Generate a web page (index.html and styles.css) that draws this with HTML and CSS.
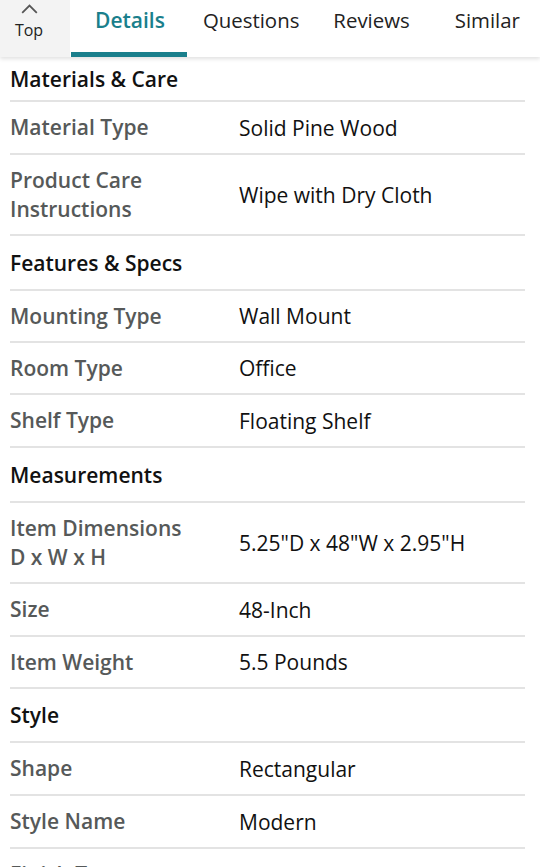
FILE: index.html
```html
<!DOCTYPE html>
<html>
<head>
<meta charset="utf-8">
<link rel="stylesheet" href="styles.css">
</head>
<body>
<nav class="tabs">
  <div class="top">
    <svg class="chev" width="17" height="10" viewBox="0 0 17 10"><path d="M1.2 8.8 L8.5 1.6 L15.8 8.8" fill="none" stroke="#555" stroke-width="1.8"/></svg>
    <span>Top</span>
  </div>
  <div class="tab active">Details</div>
  <div class="tab t2">Questions</div>
  <div class="tab t3">Reviews</div>
  <div class="tab t4">Similar</div>
</nav>
<main class="specs">
  <h2 class="head first">Materials &amp; Care</h2>
  <div class="row"><div class="lbl">Material Type</div><div class="val">Solid Pine Wood</div></div>
  <div class="row tall"><div class="lbl">Product Care<br>Instructions</div><div class="val">Wipe with Dry Cloth</div></div>
  <h2 class="head">Features &amp; Specs</h2>
  <div class="row short"><div class="lbl">Mounting Type</div><div class="val">Wall Mount</div></div>
  <div class="row short"><div class="lbl">Room Type</div><div class="val">Office</div></div>
  <div class="row"><div class="lbl">Shelf Type</div><div class="val">Floating Shelf</div></div>
  <h2 class="head">Measurements</h2>
  <div class="row tall"><div class="lbl">Item Dimensions<br>D x W x H</div><div class="val">5.25"D x 48"W x 2.95"H</div></div>
  <div class="row"><div class="lbl">Size</div><div class="val">48-Inch</div></div>
  <div class="row short"><div class="lbl">Item Weight</div><div class="val">5.5 Pounds</div></div>
  <h2 class="head compact">Style</h2>
  <div class="row"><div class="lbl">Shape</div><div class="val">Rectangular</div></div>
  <div class="row"><div class="lbl">Style Name</div><div class="val">Modern</div></div>
  <div class="row"><div class="lbl">Finish Type</div><div class="val">Painted</div></div>
</main>
</body>
</html>
```
FILE: styles.css
```css
* { box-sizing: border-box; }
html, body { margin: 0; padding: 0; background: #fff; }
body {
  font-family: "Open Sans", "Noto Sans", sans-serif;
  color: #111;
  width: 540px;
  height: 867px;
  overflow: hidden;
}
.tabs {
  display: flex;
  align-items: stretch;
  height: 57px;
  background: #fff;
  box-shadow: 0 2px 4px rgba(0,0,0,0.12);
  position: relative;
  z-index: 1;
}
.top {
  width: 70px;
  background: #f3f3f3;
  display: flex;
  flex-direction: column;
  align-items: center;
  padding: 4px 12px 0 0;
  font-size: 16px;
  color: #222;
}
.top span { margin-top: 5px; line-height: 22px; }
.tab {
  font-size: 20.4px;
  line-height: 40px;
  color: #222;
  position: relative;
  white-space: nowrap;
}
.tab.active {
  font-size: 21px;
  color: #1a7f8c;
  font-weight: 600;
  padding: 0 22px 0 24px;
  margin-left: 1px;
}
.tab.active::after {
  content: "";
  position: absolute;
  left: 0; right: 0; bottom: 0;
  height: 5px;
  background: #1a7f8c;
}
.t2 { margin-left: 16px; }
.t3 { margin-left: 34px; }
.t4 { margin-left: 45px; }
.specs { padding: 0 15px 0 10px; }
.head {
  margin: 0;
  font-size: 21px;
  font-weight: 600;
  height: 55px;
  display: flex;
  align-items: center;
  border-bottom: 2px solid #e3e3e3;
  color: #111;
}
.head.first { height: 45px; padding-top: 1px; }
.head.compact { height: 54px; }
.row {
  display: flex;
  align-items: center;
  height: 53px;
  border-bottom: 2px solid #e3e3e3;
  font-size: 21px;
}
.row.short { height: 52px; }
.row.tall { height: 81px; }
.lbl {
  width: 229px;
  flex: none;
  font-weight: 600;
  color: #565959;
  line-height: 29px;
}
.val { color: #111; }
```
